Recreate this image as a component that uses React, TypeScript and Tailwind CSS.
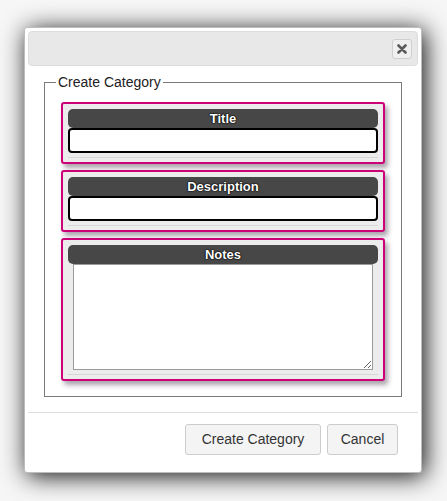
import React from "react";

const comic = { fontFamily: '"Comic Sans MS", "Liberation Sans", sans-serif' };

function Group({ label, children }: { label: string; children: React.ReactNode }) {
  return (
    <div className="border-2 border-[#cc0077] rounded-[3px] bg-[#ececec] px-[5px] pt-[5px] pb-[4px] shadow-[3px_4px_5px_rgba(70,50,70,0.45)]">
      <div
        className="h-[19px] rounded-[5px] bg-[#474747] text-white text-[13px] font-bold leading-[19px] text-center [text-shadow:0_0_2px_#000,0_0_1px_#000,0_0_1px_#000]"
        style={{ fontFamily: '"Liberation Sans", sans-serif' }}
      >
        {label}
      </div>
      {children}
      <div className="mt-[4px] h-px bg-[#d6d6d6]" />
    </div>
  );
}

export default function App() {
  return (
    <div className="w-[447px] h-[501px] bg-[#f6f6f6] pl-[24px] pt-[27px]" style={comic}>
      <div className="w-[398px] bg-white border border-[#bdbdbd] rounded-[3px] p-[3px] shadow-[3px_3px_24px_rgba(0,0,0,0.95)]">
        <div className="h-[35px] bg-[#e8e8e8] border border-[#dcdcdc] rounded-[4px] flex items-center justify-end pr-[5px]">
          <button className="w-[20px] h-[20px] bg-[#f0f0f0] border border-[#cfcfcf] rounded-[3px] flex items-center justify-center">
            <svg width="10" height="10" viewBox="0 0 10 10">
              <path d="M1.5 1.5 L8.5 8.5 M8.5 1.5 L1.5 8.5" stroke="#5a5a5a" strokeWidth="2.6" strokeLinecap="round" />
            </svg>
          </button>
        </div>

        <fieldset className="mt-[7px] mx-[16px] border border-[#7a7a7a] px-[16px] pt-[11px] pb-[15px]">
          <legend className="-ml-[5px] px-[2px] text-[14px] leading-[18px] text-[#222]">Create Category</legend>
          <div className="flex flex-col gap-[6px]">
            <Group label="Title">
              <div className="h-[25px] bg-white border-2 border-black rounded-[4px]" />
            </Group>
            <Group label="Description">
              <div className="h-[25px] bg-white border-2 border-black rounded-[4px]" />
            </Group>
            <Group label="Notes">
              <div className="px-[5px]">
                <textarea className="block w-full h-[106px] bg-white border border-[#9a9a9a] resize-y outline-none" />
              </div>
            </Group>
          </div>
        </fieldset>

        <div className="mt-[15px] border-t border-[#dddddd] pt-[11px] pb-[14px] pr-[20px] flex justify-end gap-[6px]">
          <button className="w-[136px] h-[31px] bg-[#f4f4f4] border border-[#cccccc] rounded-[3px] text-[14px] text-[#333]">
            Create Category
          </button>
          <button className="w-[71px] h-[31px] bg-[#f4f4f4] border border-[#cccccc] rounded-[3px] text-[14px] text-[#333]">
            Cancel
          </button>
        </div>
      </div>
    </div>
  );
}
